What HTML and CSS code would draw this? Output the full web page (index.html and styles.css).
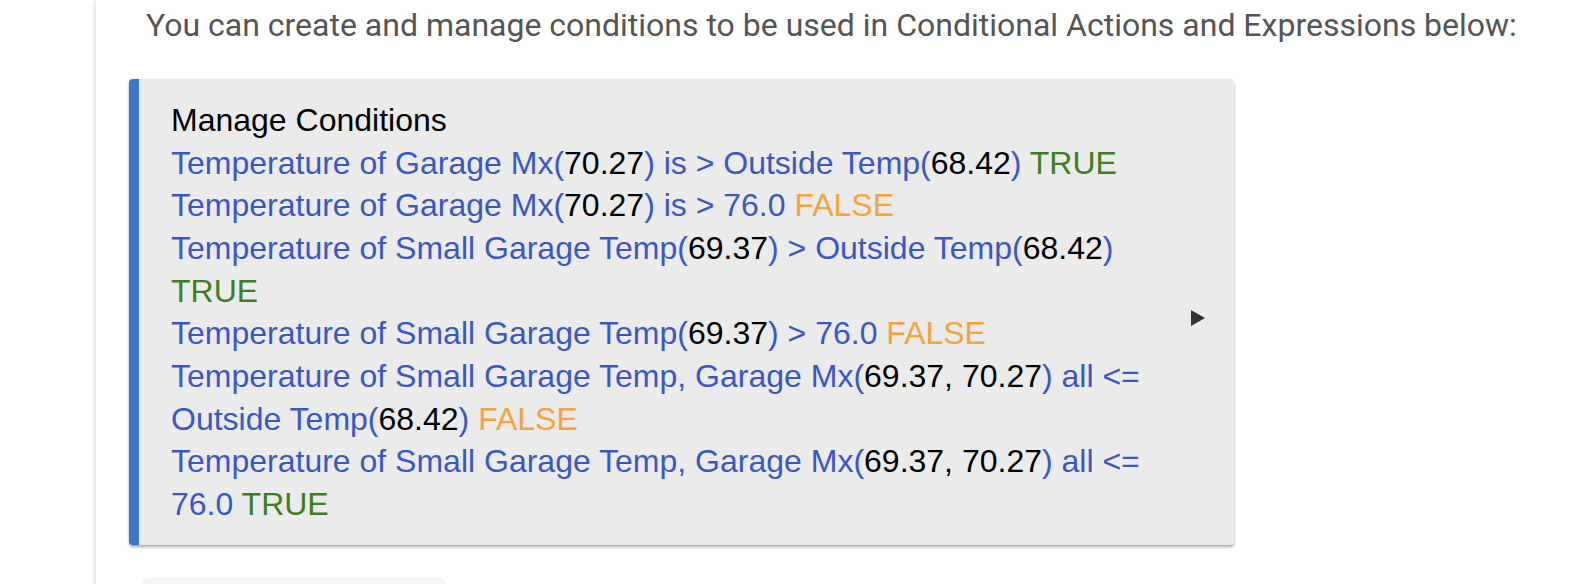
FILE: index.html
```html
<!DOCTYPE html>
<html>
<head>
<meta charset="utf-8">
<link rel="stylesheet" href="styles.css">
</head>
<body>
<div class="page">
  <div class="gutter"></div>
  <div class="panel">
    <p class="intro">You can create and manage conditions to be used in Conditional Actions and Expressions below:</p>
    <div class="card">
      <div class="card-body">
        <div class="title">Manage Conditions</div>
        <div class="cond">Temperature of Garage Mx(<span class="val">70.27</span>) is &gt; Outside Temp(<span class="val">68.42</span>) <span class="t">TRUE</span></div>
        <div class="cond">Temperature of Garage Mx(<span class="val">70.27</span>) is &gt; 76.0 <span class="f">FALSE</span></div>
        <div class="cond">Temperature of Small Garage Temp(<span class="val">69.37</span>) &gt; Outside Temp(<span class="val">68.42</span>)<br><span class="t">TRUE</span></div>
        <div class="cond">Temperature of Small Garage Temp(<span class="val">69.37</span>) &gt; 76.0 <span class="f">FALSE</span></div>
        <div class="cond">Temperature of Small Garage Temp, Garage Mx(<span class="val">69.37, 70.27</span>) all &lt;=<br>Outside Temp(<span class="val">68.42</span>) <span class="f">FALSE</span></div>
        <div class="cond">Temperature of Small Garage Temp, Garage Mx(<span class="val">69.37, 70.27</span>) all &lt;=<br>76.0 <span class="t">TRUE</span></div>
      </div>
      <svg class="arrow" width="14" height="16" viewBox="0 0 14 16"><path d="M0 0 L14 8 L0 16 Z" fill="#333"/></svg>
    </div>
    <div class="next"></div>
  </div>
</div>
</body>
</html>
```
FILE: styles.css
```css
html, body {
  margin: 0;
  padding: 0;
  background: #fff;
  height: 584px;
  overflow: hidden;
}
.page {
  display: flex;
  min-height: 584px;
}
.gutter {
  width: 96px;
  flex: none;
}
.panel {
  flex: 1;
  box-shadow: -2px 0 4px rgba(0,0,0,0.12);
  padding-left: 33px;
}
.intro {
  margin: 0;
  padding: 4px 0 0 17px;
  font-family: Roboto, sans-serif;
  font-size: 32px;
  line-height: 42px;
  color: #555;
  white-space: nowrap;
}
.card {
  margin-top: 33px;
  width: 1105px;
  box-sizing: border-box;
  background: #ebebeb;
  border-left: 10px solid #3a77c8;
  border-radius: 4px;
  box-shadow: 0 2px 3px rgba(0,0,0,0.35);
  display: flex;
  align-items: center;
  padding: 20px 29px 19px 32px;
  font-family: "Liberation Sans", Arial, sans-serif;
  font-size: 32px;
  line-height: 42.67px;
}
.card-body {
  flex: 1;
  white-space: nowrap;
}
.title { color: #000; }
.cond { color: #3a58c4; }
.val { color: #000; }
.t { color: #3c7f1e; }
.f { color: #f5a537; }
.arrow {
  flex: none;
  margin-top: 12px;
}
.next {
  margin: 33px 0 0 14px;
  width: 302px;
  height: 40px;
  background: #f4f4f4;
  border-radius: 6px;
  box-shadow: 0 0 2px rgba(0,0,0,0.08);
}
```
